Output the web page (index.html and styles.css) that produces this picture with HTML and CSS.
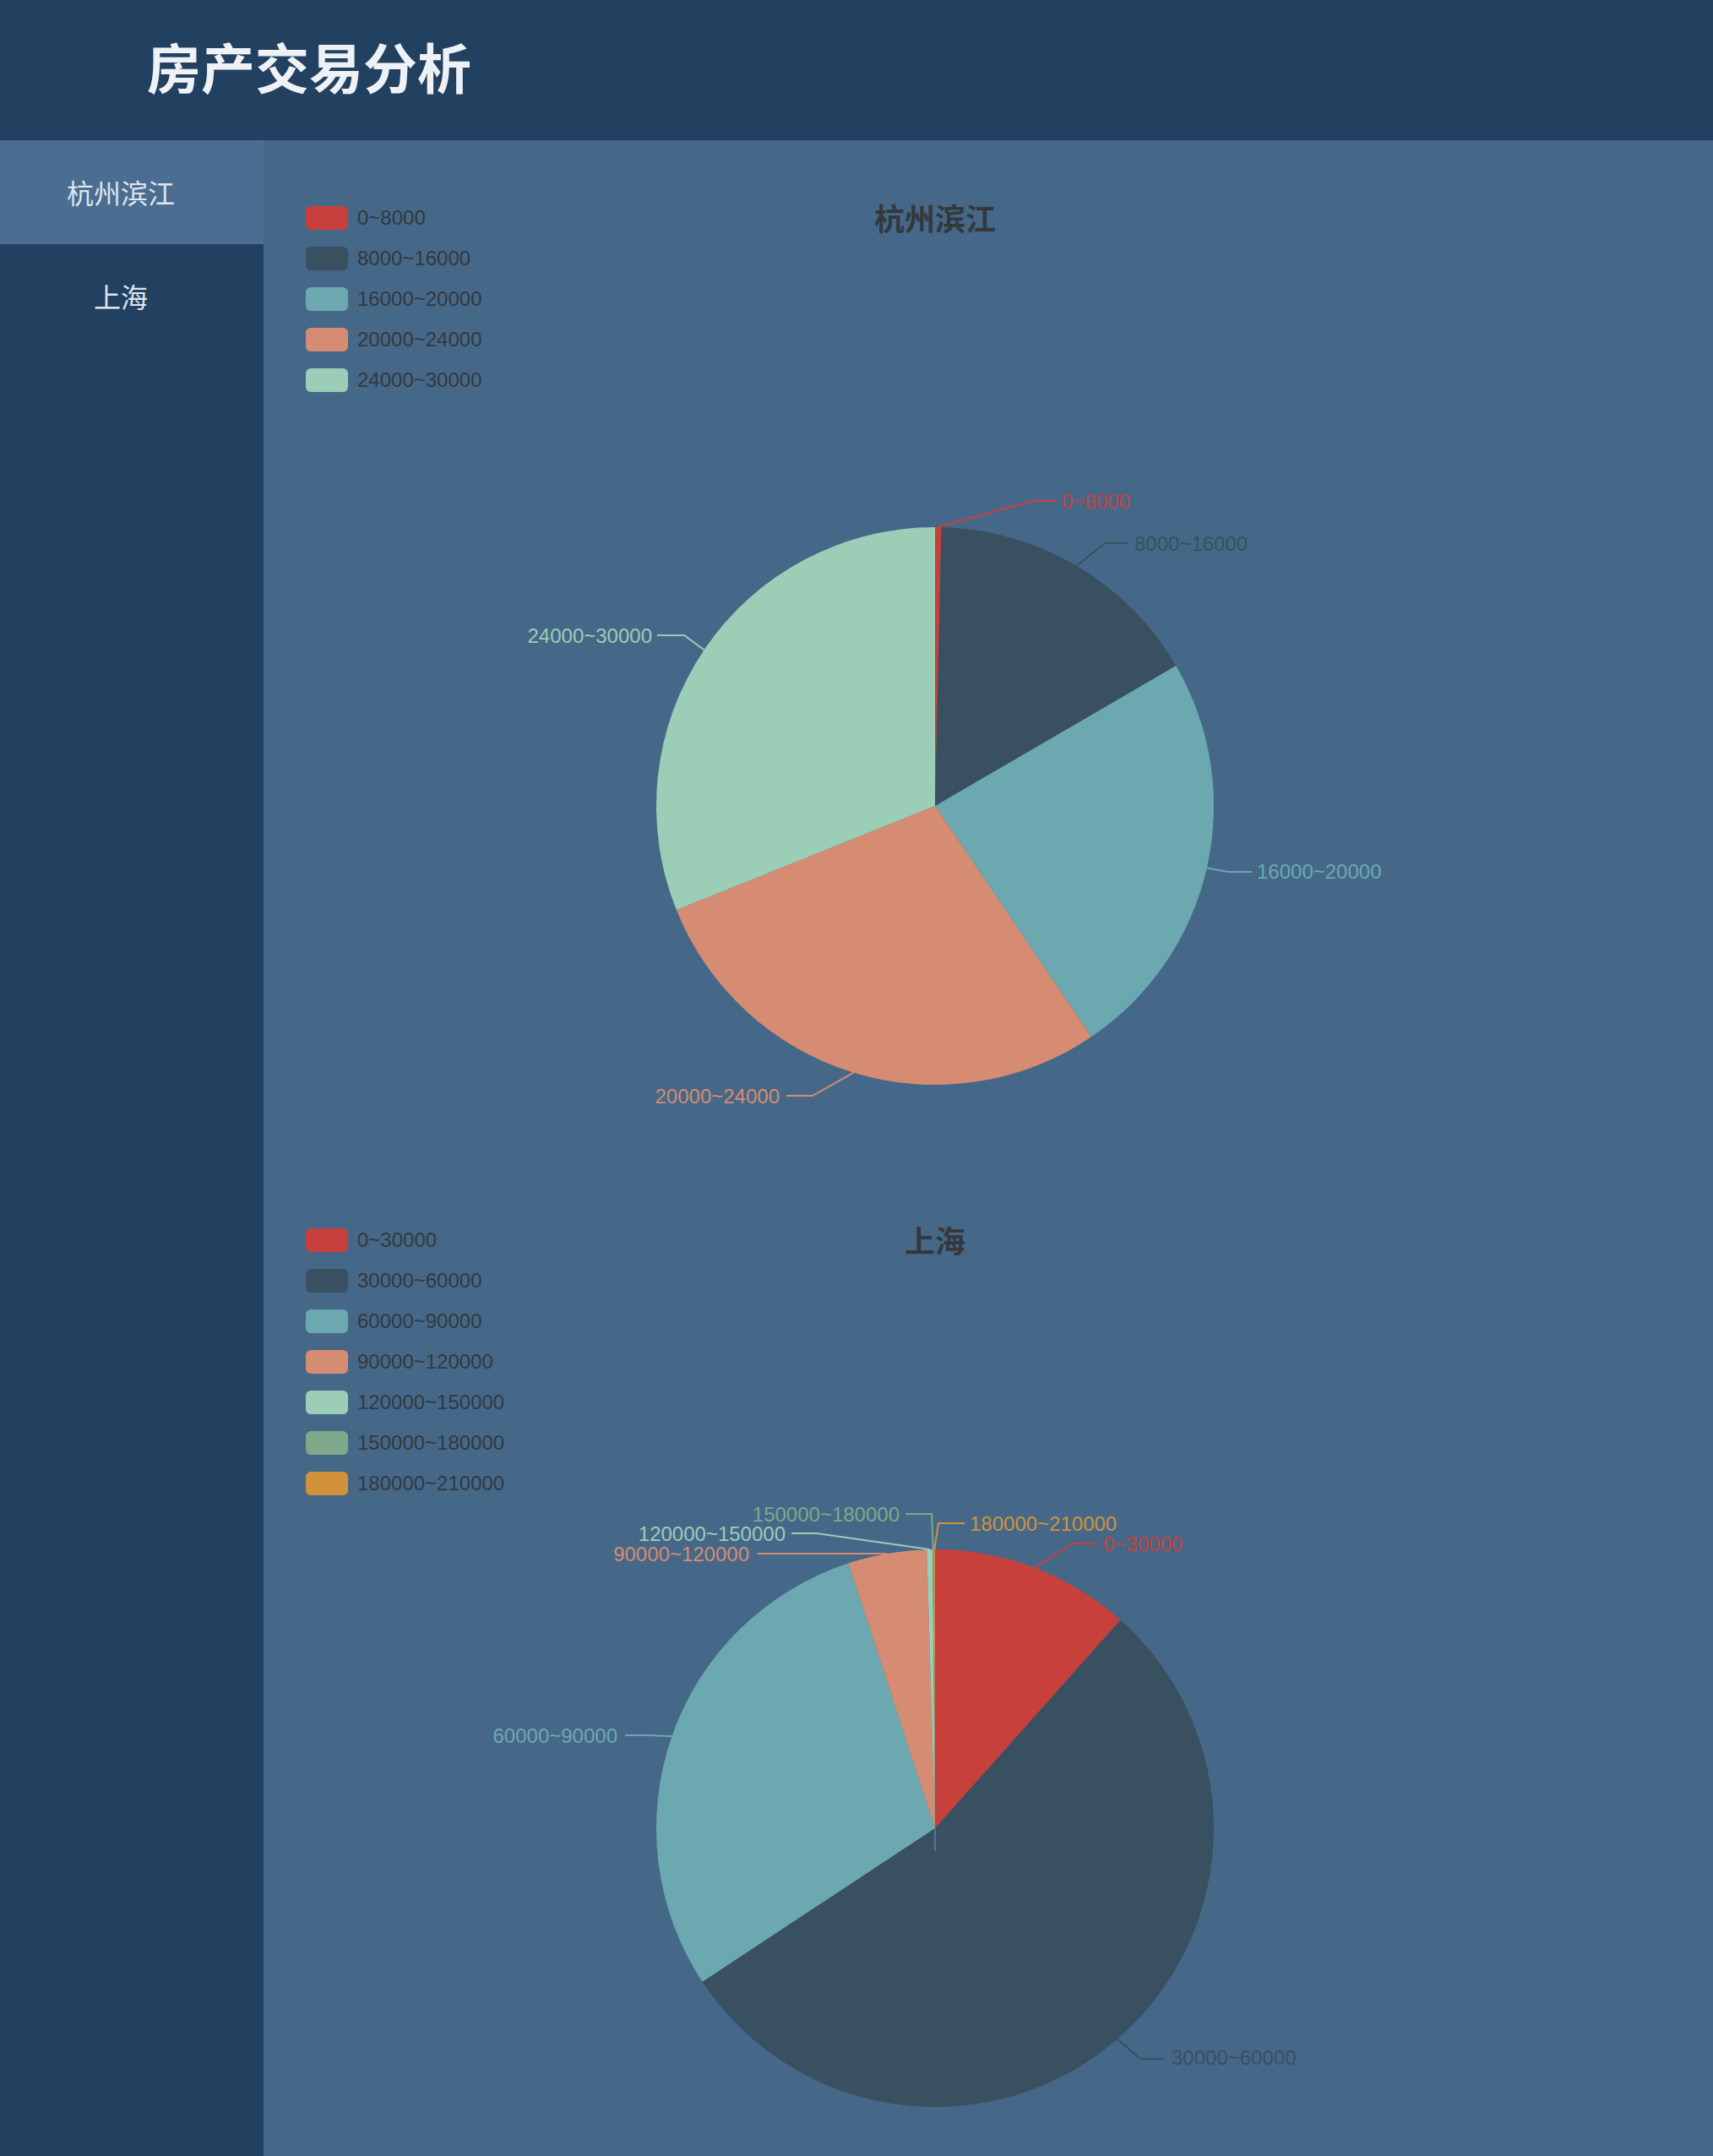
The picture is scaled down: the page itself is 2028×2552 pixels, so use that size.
FILE: index.html
```html
<!DOCTYPE html>
<html lang="zh-CN">
<head>
<meta charset="utf-8">
<title>房产交易分析</title>
<link rel="stylesheet" href="styles.css">
</head>
<body>
<header class="topbar">
  <h1 class="brand">房产交易分析</h1>
</header>
<div class="layout">
  <nav class="sidebar">
    <ul class="nav">
      <li class="nav-item active">杭州滨江</li>
      <li class="nav-item">上海</li>
    </ul>
  </nav>
  <main class="content">
    <section class="chart">
      <ul class="legend">
        <li class="legend-item"><span class="swatch c1"></span>0~8000</li>
        <li class="legend-item"><span class="swatch c2"></span>8000~16000</li>
        <li class="legend-item"><span class="swatch c3"></span>16000~20000</li>
        <li class="legend-item"><span class="swatch c4"></span>20000~24000</li>
        <li class="legend-item"><span class="swatch c5"></span>24000~30000</li>
      </ul>
      <h2 class="chart-title">杭州滨江</h2>
      <svg class="pie" viewBox="0 0 1510 1210" xmlns="http://www.w3.org/2000/svg">
        <path class="f1" d="M755 720 L755 390 A330 330 0 0 1 762.49 390.09 Z"/>
        <path class="f2" d="M755 720 L762.49 390.09 A330 330 0 0 1 1040.21 554 Z"/>
        <path class="f3" d="M755 720 L1040.21 554 A330 330 0 0 1 940 993.3 Z"/>
        <path class="f4" d="M755 720 L940 993.3 A330 330 0 0 1 448.8 843.1 Z"/>
        <path class="f5" d="M755 720 L448.8 843.1 A330 330 0 0 1 755 390 Z"/>

        <polyline class="l1" points="758.7,390 870,359 898,359"/>
        <text class="t1" x="905" y="359">0~8000</text>
        <polyline class="l2" points="922.7,435.8 956,409 983,409"/>
        <text class="t2" x="991" y="409">8000~16000</text>
        <polyline class="l3" points="1076.7,793.4 1103,798 1130,798"/>
        <text class="t3" x="1136" y="797">16000~20000</text>
        <polyline class="l4" points="658.5,1035.6 610,1063 579,1063"/>
        <text class="t4 end" x="571" y="1063">20000~24000</text>
        <polyline class="l5" points="481.6,535.2 458,518 426,518"/>
        <text class="t5 end" x="420" y="518">24000~30000</text>
      </svg>
    </section>

    <section class="chart">
      <ul class="legend">
        <li class="legend-item"><span class="swatch c1"></span>0~30000</li>
        <li class="legend-item"><span class="swatch c2"></span>30000~60000</li>
        <li class="legend-item"><span class="swatch c3"></span>60000~90000</li>
        <li class="legend-item"><span class="swatch c4"></span>90000~120000</li>
        <li class="legend-item"><span class="swatch c5"></span>120000~150000</li>
        <li class="legend-item"><span class="swatch c6"></span>150000~180000</li>
        <li class="legend-item"><span class="swatch c7"></span>180000~210000</li>
      </ul>
      <h2 class="chart-title">上海</h2>
      <svg class="pie" viewBox="0 0 1510 1210" xmlns="http://www.w3.org/2000/svg">
        <path class="f1" d="M755 720 L755 390 A330 330 0 0 1 974.53 473.61 Z"/>
        <path class="f2" d="M755 720 L974.53 473.61 A330 330 0 1 1 479.49 901.66 Z"/>
        <path class="f3" d="M755 720 L479.49 901.66 A330 330 0 0 1 652.48 406.33 Z"/>
        <path class="f4" d="M755 720 L652.48 406.33 A330 330 0 0 1 745.21 390.15 Z"/>
        <path class="f5" d="M755 720 L745.21 390.15 A330 330 0 0 1 752.12 390.01 Z"/>
        <path class="f6" d="M755 720 L752.12 390.01 A330 330 0 0 1 753.56 390 Z"/>
        <path class="f7" d="M755 720 L753.56 390 A330 330 0 0 1 755 390 Z"/>
        <line class="seam" x1="755" y1="720" x2="755" y2="747"/>

        <polyline class="l1" points="872.5,411.6 918,383 948,383"/>
        <text class="t1" x="954" y="383">0~30000</text>
        <polyline class="l2" points="970.9,969.6 998,993 1026,993"/>
        <text class="t2" x="1035" y="991">30000~60000</text>
        <polyline class="l3" points="443.5,611.2 416,610 388,610"/>
        <text class="t3 end" x="379" y="610">60000~90000</text>
        <polyline class="l4" points="698.3,394.9 545,395"/>
        <text class="t4 end" x="535" y="395">90000~120000</text>
        <polyline class="l5" points="748.7,390 615,371 585,371"/>
        <text class="t5 end" x="578" y="371">120000~150000</text>
        <polyline class="l6" points="752.8,390 751,348 720,348"/>
        <text class="t6 end" x="713" y="348">150000~180000</text>
        <polyline class="l7" points="754.3,390 759,359 790,359"/>
        <text class="t7" x="796" y="359">180000~210000</text>
      </svg>
    </section>
  </main>
</div>
</body>
</html>
```

FILE: styles.css
```css
html,
body {
  margin: 0;
  height: 100%;
  overflow: hidden;
}

body {
  font-family: "Liberation Sans", "Noto Sans CJK SC", sans-serif;
  background: #456889;
}

.topbar {
  height: 166px;
  box-sizing: border-box;
  display: flex;
  align-items: center;
  padding: 0 0 12px 174px;
  background: #22405f;
}

.brand {
  margin: 0;
  font-family: "Noto Sans CJK SC", sans-serif;
  font-weight: 700;
  font-size: 64px;
  line-height: 1;
  color: #eef1f6;
}

.layout {
  display: flex;
  height: calc(100% - 166px);
}

.sidebar {
  width: 312px;
  flex: none;
  background: #22405f;
}

.nav {
  list-style: none;
  margin: 0;
  padding: 0;
}

.nav-item {
  height: 123px;
  box-sizing: border-box;
  display: flex;
  align-items: center;
  justify-content: center;
  padding: 0 26px 2px 0;
  font-family: "Noto Sans CJK SC", sans-serif;
  font-size: 32px;
  color: #dfe5ec;
}

.nav-item.active {
  background: #4a6d91;
}

.content {
  flex: 1;
  min-width: 0;
  padding: 68px 0 0 40px;
  overflow: hidden;
}

.chart {
  position: relative;
  width: 1510px;
  height: 1210px;
}

.legend {
  position: relative;
  z-index: 1;
  list-style: none;
  margin: 0;
  padding: 10px;
  width: max-content;
  display: flex;
  flex-direction: column;
  gap: 20px;
}

.legend-item {
  height: 28px;
  display: flex;
  align-items: center;
  gap: 11px;
  font-size: 24px;
  color: #34383d;
}

.swatch {
  width: 50px;
  height: 28px;
  border-radius: 6px;
}

.chart-title {
  position: absolute;
  top: 5px;
  left: 0;
  right: 0;
  margin: 0;
  text-align: center;
  font-family: "Noto Sans CJK SC", sans-serif;
  font-weight: 700;
  font-size: 36px;
  line-height: 36px;
  color: #34383d;
}

.pie {
  position: absolute;
  left: 0;
  top: 0;
  width: 100%;
  height: 100%;
}

.pie text {
  font-family: "Liberation Sans", sans-serif;
  font-size: 24px;
  dominant-baseline: central;
}

.pie text.end {
  text-anchor: end;
}

.pie polyline {
  fill: none;
  stroke-width: 2;
}

.seam {
  stroke: #5d8696;
  stroke-width: 1.5;
}

/* series colours */
.c1 { background: #c8403c; }
.c2 { background: #38505f; }
.c3 { background: #6ca8b0; }
.c4 { background: #d68c72; }
.c5 { background: #9ccdb6; }
.c6 { background: #7fa88b; }
.c7 { background: #d2923a; }

.f1 { fill: #c8403c; }
.f2 { fill: #38505f; }
.f3 { fill: #6ca8b0; }
.f4 { fill: #d68c72; }
.f5 { fill: #9ccdb6; }
.f6 { fill: #7fa88b; }
.f7 { fill: #d2923a; }

.l1 { stroke: #c8403c; }
.l2 { stroke: #38505f; }
.l3 { stroke: #6ca8b0; }
.l4 { stroke: #d68c72; }
.l5 { stroke: #9ccdb6; }
.l6 { stroke: #7fa88b; }
.l7 { stroke: #d2923a; }

.t1 { fill: #c8403c; }
.t2 { fill: #38505f; }
.t3 { fill: #6ca8b0; }
.t4 { fill: #d68c72; }
.t5 { fill: #9ccdb6; }
.t6 { fill: #7fa88b; }
.t7 { fill: #d2923a; }
```
